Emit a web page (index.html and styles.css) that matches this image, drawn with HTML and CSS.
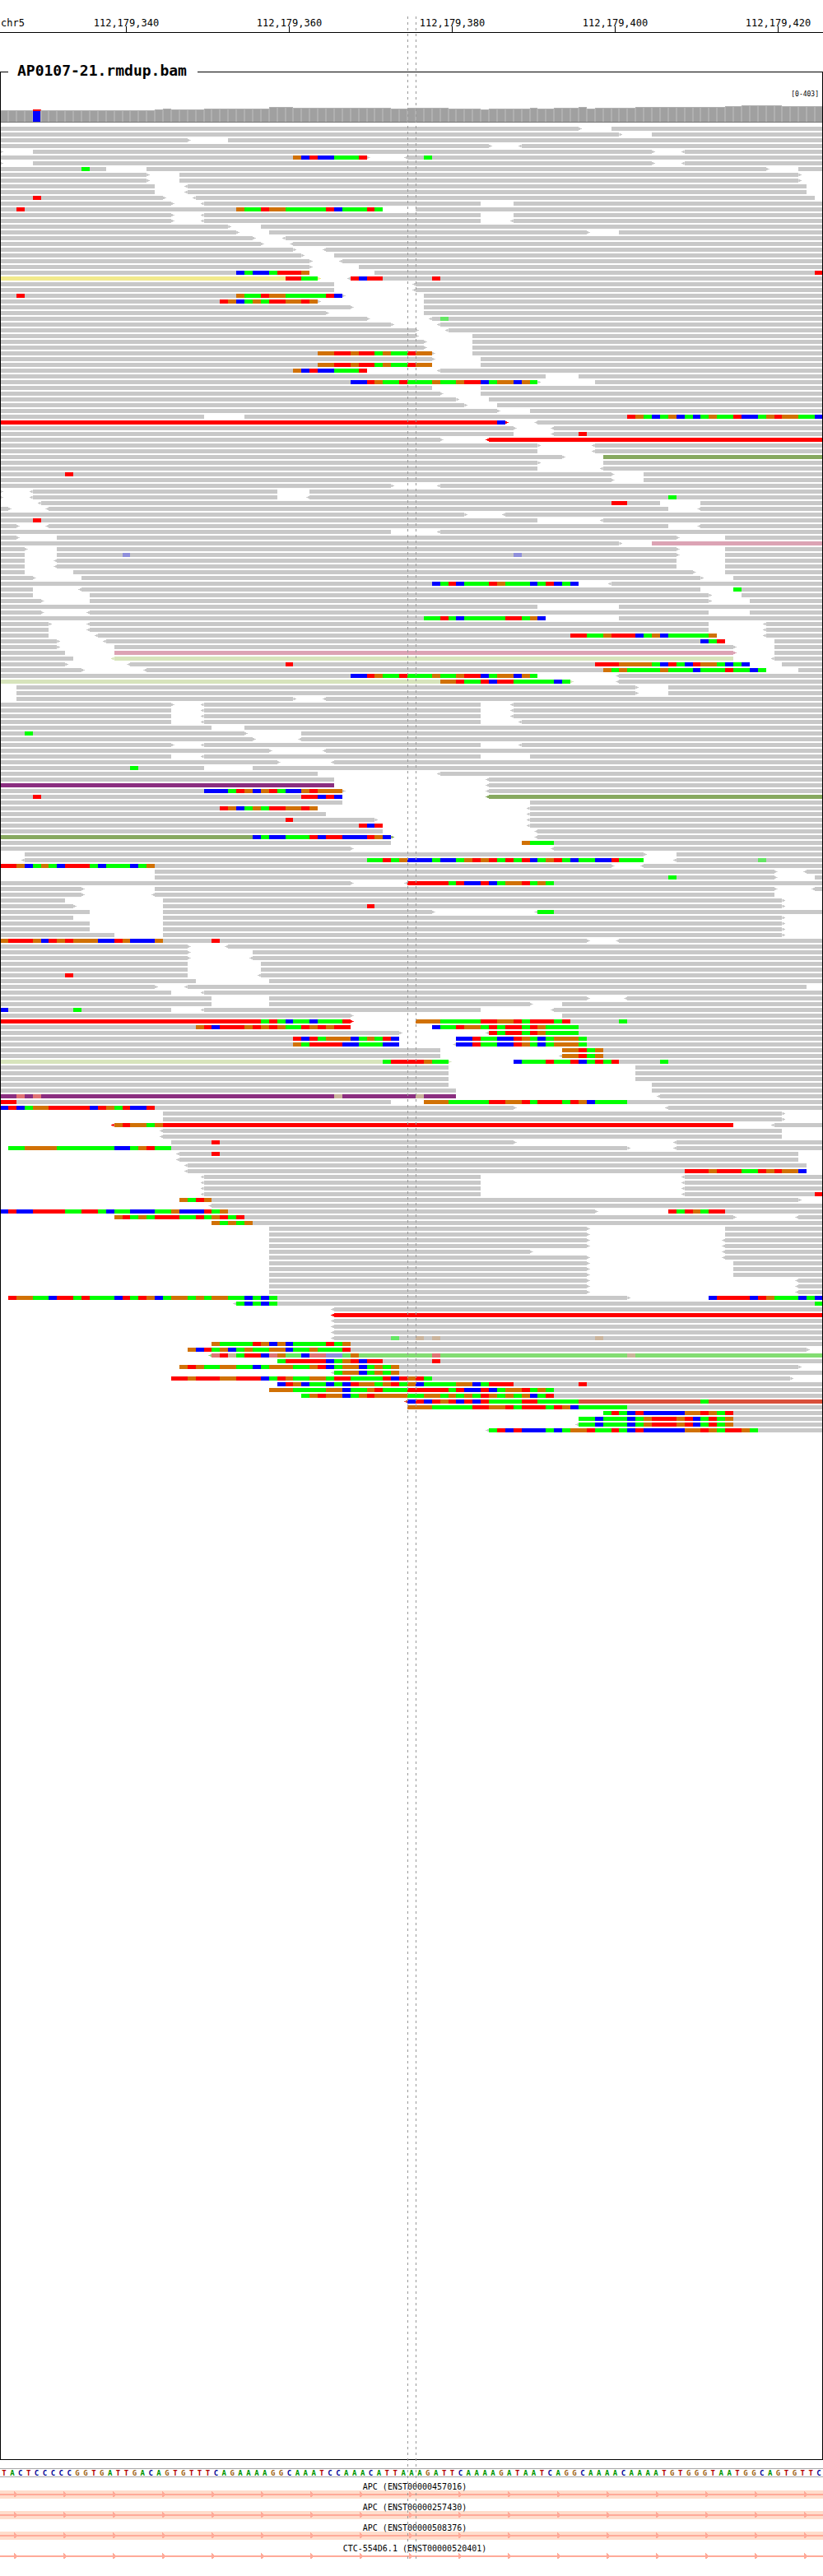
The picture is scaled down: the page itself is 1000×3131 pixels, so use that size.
FILE: index.html
```html
<!DOCTYPE html>
<html lang="en">
<head>
<meta charset="utf-8">
<title>AP0107-21.rmdup.bam</title>
<link rel="stylesheet" href="styles.css">
</head>
<body>
<header class="ruler">
  <span class="chrom">chr5</span>
  <div class="tick tick-340">112,179,340</div>
  <div class="tick tick-360">112,179,360</div>
  <div class="tick tick-380">112,179,380</div>
  <div class="tick tick-400">112,179,400</div>
  <div class="tick tick-420">112,179,420</div>
</header>

<main class="panel">
  <h1 class="panel-title">AP0107-21.rmdup.bam</h1>
  <p class="scale">[0-403]</p>
  <div class="coverage" id="coverage"></div>
  <div class="reads" id="reads"></div>
</main>

<div class="sequence" id="sequence"></div>

<section class="genes">
  <svg class="defs" width="0" height="0" aria-hidden="true">
    <defs>
      <pattern id="strand" width="60" height="10" patternUnits="userSpaceOnUse">
        <path class="strand-line" d="M0 4h60v2H0z"/>
        <path class="strand-line" d="M17 1h1v1h1v1h1v4h-1v1h-1h-1z"/>
      </pattern>
    </defs>
  </svg>
  <div class="gene exon"><p class="gene-name">APC (ENST00000457016)</p><svg class="gene-track"><rect width="100%" height="10" fill="url(#strand)"/></svg></div>
  <div class="gene exon"><p class="gene-name">APC (ENST00000257430)</p><svg class="gene-track"><rect width="100%" height="10" fill="url(#strand)"/></svg></div>
  <div class="gene exon"><p class="gene-name">APC (ENST00000508376)</p><svg class="gene-track"><rect width="100%" height="10" fill="url(#strand)"/></svg></div>
  <div class="gene"><p class="gene-name">CTC-554D6.1 (ENST00000520401)</p><svg class="gene-track"><rect width="100%" height="10" fill="url(#strand)"/></svg></div>
</section>

<div class="cursor"></div>
<script src="plot.js"></script>
</body>
</html>
```

FILE: styles.css
```css
* { box-sizing: border-box; }

body {
  position: relative;
  display: flex;
  flex-direction: column;
  min-height: 100vh;
  margin: 0;
  padding-bottom: 19px;
  background: #fff;
  color: #000;
  font-family: "DejaVu Sans Mono", monospace;
}

p, h1 { margin: 0; }

/* Every horizontal strip shares the same grid: one column per base. */
.ruler, .coverage, .row, .sequence {
  display: grid;
  grid-template-columns: repeat(101, minmax(0, 1fr));
}

.ruler {
  height: 40px;
  padding-top: 21px;
  border-bottom: 1px solid #000;
  font-size: 12px;
  line-height: 14px;
}
.chrom {
  grid-area: 1 / 1;
  padding-left: 1px;
}
.tick {
  grid-row: 1;
  display: flex;
  flex-direction: column;
  align-items: center;
  white-space: nowrap;
}
.tick::after {
  content: "";
  width: 1px;
  height: 7px;
  margin-top: -3px;
  background: #000;
}
.tick-340 { grid-column: 16; }
.tick-360 { grid-column: 36; }
.tick-380 { grid-column: 56; }
.tick-400 { grid-column: 76; }
.tick-420 { grid-column: 96; }

.panel {
  position: relative;
  flex: 1;
  margin-top: 47px;
  padding-top: 1px;
  display: flex;
  flex-direction: column;
}
/* The frame lies over the reads so that they pass under its sides. */
.panel::after {
  content: "";
  position: absolute;
  inset: 0;
  border: 1px solid #000;
  pointer-events: none;
}
.panel-title {
  position: relative;
  z-index: 1;
  align-self: flex-start;
  margin: -14px 0 0 10px;
  padding: 0 13px 0 11px;
  background: #fff;
  font-size: 18px;
  line-height: 24px;
}
.scale {
  margin-top: 12px;
  padding-right: 5px;
  font-size: 8px;
  line-height: 10px;
  text-align: right;
}

.coverage {
  height: 29px;
  align-items: end;
  border-bottom: 1px solid #777;
}
.depth {
  border: 1px solid #b0b0b0;
  border-bottom: 0;
  background: #a0a0a0;
}
.depth-variant {
  border-width: 0 1px 0 0;
  border-top: 2px solid #f00;
  background: #00f;
}

.reads { padding-top: 5px; }
.row {
  height: 5px;
  margin-bottom: 2px;
}
.read {
  grid-row: 1;
  position: relative;
  background: #c8c8c8;
}
.read-empty { width: 0; }
.forward::after, .reverse::before {
  content: "";
  position: absolute;
  top: 0;
  width: 4px;
  height: 5px;
  background: inherit;
}
.forward::after {
  left: 100%;
  clip-path: polygon(0 1px, 2px 1px, 2px 2px, 4px 2px, 4px 3px, 2px 3px, 2px 4px, 0 4px);
}
.reverse::before {
  right: 100%;
  clip-path: polygon(4px 1px, 2px 1px, 2px 2px, 0 2px, 0 3px, 2px 3px, 2px 4px, 4px 4px);
}

.read-red { background: #f00; }
.read-khaki { background: #f2ea8c; }
.read-olive { background: #87a960; }
.read-pink { background: #dca3b4; }
.read-sage { background: #d7e4bc; }
.read-purple { background: #8b2e80; }
.read-lime { background: #82dd72; }
.read-tomato { background: #d94f3a; }

.base { grid-row: 1; position: relative; }
.base-A { background: #0f0; }
.base-C { background: #00f; }
.base-G { background: #d17105; }
.base-T { background: #f00; }
.base-a { background: #64e664; }
.base-c { background: #8f8fdb; }
.base-g { background: #cbb49c; }
.base-t { background: #e07474; }

.sequence {
  height: 11px;
  margin-top: 10px;
  border-top: 1px solid #a8a8a8;
  border-bottom: 1px solid #a8a8a8;
  font-size: 9px;
  font-weight: bold;
  line-height: 11px;
  text-align: center;
}
.nt-A { color: #009600; }
.nt-C { color: #000096; }
.nt-G { color: #a06414; }
.nt-T { color: #b40000; }

.genes { padding-top: 1px; }
.defs { position: absolute; }
.gene { padding-top: 5px; }
.gene-name {
  height: 10px;
  padding-left: 8px;
  font-size: 10px;
  line-height: 12px;
  text-align: center;
}
.gene-track {
  display: block;
  width: 100%;
  height: 10px;
}
.exon .gene-track { background: #fdc; }
.strand-line { fill: #fa9; }

/* Dashed guides either side of the central base. */
.cursor {
  position: absolute;
  top: 20px;
  bottom: 21px;
  left: calc(100% * 50 / 101);
  width: calc(100% / 101 + 1px);
  background:
    repeating-linear-gradient(#999 0 3px, transparent 3px 7px) left / 1px 100% no-repeat,
    repeating-linear-gradient(#999 0 3px, transparent 3px 7px) right / 1px 100% no-repeat;
  pointer-events: none;
}
```

FILE: plot.js
```js
const BASES = 101;

// Column heights of the coverage track: [pixels, number of bases].
const DEPTH = [
  [14, 4], [15, 1], [14, 14], [15, 1], [16, 1], [15, 4], [16, 8], [18, 3], [17, 12], [16, 2],
  [17, 5], [16, 4], [15, 1], [16, 5], [17, 1], [16, 2], [17, 3], [18, 1], [16, 1],
  [17, 5], [18, 11], [19, 2], [20, 5], [19, 5]
];
const VARIANT = 4;

const SEQUENCE = "TACTCCCCCGGTGATTGACAGTGTTTCAGAAAAGGCAAATCCAAACATTAAAGATTCAAAAGATAATCAGGCAAAACAAAATGTGGGTAATGGCAGTGTTC";

// One line per row. A read is start-end, with < or > where it has an arrow,
// ~colour, and ;position:letters for mismatches (lower case = low quality).
const ROWS = `
0-71> 75-
0-76> 80-
0-23> 28-
0-60> <64-
0-0> 4-80> <84-
0-45>;36:GCTCCAAAT <50-;52:A
0-0> 4-80> <84-
0-13;10:A 18-94> 98-
0-18> 22-98>
0-18> 22-98>
0-19 <23-99
0-19 <23-99
0-20>;4:T <24-100
0-21> <25-59 63-
0-47;2:T;29:GAATGGAAAAATCAAATA 51-
0-21> <25-59 63-
0-21> <25-59 <63-
0-28> 32-
0-29> 33-72> 76-
0-31> <35-
0-32> <36-
0-36> <40-
0-37> 41-
0-38> <42-
0-38> 44-
0-38;29:CACCATTTG 46-;100:T
0-39>~khaki;35:TTAA <43-;43:TCTT;53:T
0-41 <51-
0-41 <51-
0-42>;2:T;29:GAATGGAAAAATC 52-
0-39>;27:TGCAGATTGGTG 52-
0-43> 52-
0-40> 52-
0-45> <53-;54:a
0-48> <54-
0-51> <55-
0-51> 58-
0-52> 58-
0-52> 58-
0-53>;39:GGTTGTTAGAATGG 58-
0-53> 59-
0-53;39:GGTTGTTAGAATGG 59-
0-45;36:GCTCCAAAT <54-
0-67 71-
0-66>;43:CCTGAATAAAGAAGTTCAGGCGA 73-
0-53 59-
0-54> 59-
0-56> 60-
0-57> 61-
0-61> 65-
0-25 30-;77:TGACAGCACAGAATCCAGTGGAAC
0-62>~red;61:C <66-
0-63> <68-
0-63 <68-;71:T
0-54> <60-~red
0-66> <73-
0-66 <73-
0-69> 74-~olive
0-66> 74-
0-66 <74-
0-75>;8:T 79-
0-75> 79-
0-48> <54-
0-0> <4-34 38-
0-0> <4-34 <38-;82:A
<5-81;75:TT 86-
0-1> <6-82 <86-
0-57> <62-
0-66;4:T <74-
0-2> <6-82 <86-
0-48 <54-
0-2> 7-83> 89-
0-76> 80-~pink
0-3> 7-83> 89-
0-3 7-83>;15:c;63:c 89-
0-3 <7-83 89-
0-3 <7-83 89-
0-3 9-85> 89-
0-4> 10-86> 90-
0-71;53:CATCAAATGAAACATCAC <75-
0-4 <10-86 90-;90:A
0-4 11-87> 91-
0-5> 11-87> 92-
0-66 76-
0-5> <11-87 92-
0-67;52:AATACAAAAATTAGC 76-
0-6> <11-87 <94-
0-6 <11-87 <94-
0-6 <12-88;70:TTAAGTTTCAGCAAAAAG <94-
0-7> <13-89;86:CAT 95-
0-7> 14-90> 95-
0-8 14-90>~pink 95-
0-9 <14-90~sage <95-
0-8> <16-92;35:T;73:TTTGGGGACTACTGGACAC 96-
0-10> <18-94;74:GAGAAAAGAAACAAATAACA 98-
0-66;43:CCTGAATAAAGAAGTTCAGGCGA <76-
0-70>~sage;54:GGTAATCTTAAAAACA <76-
2-78> 82-
2-78> 82-
2-36> <40-
0-21> <25-59 <63-
0-21 <25-59 <63-
0-21 <25-59 <63-
0-21 <25-59 <64-
0-26 30-
0-30>;3:A 37-
0-31> <37-
0-21> <25-59 <64-
0-33> <40-
0-21 <25-59 65-
0-34> <41-
0-25;16:A 31-
0-39 <54-
0-41 <60-
0-41~purple <60-
0-42>;25:CCCATGCGTACCGTGGG <60-
0-42;4:T;37:TTCTC <60-~olive
0-42 65-
0-39;27:TGCAGATTGGTG <65-
0-40 <65-
0-46>;35:T <65-
0-47;44:TCT <65-
0-47 <66-
0-48>~olive;31:CACCAAATCTTCCCTGC <66-
0-48 64-;64:GAAA
0-43> <68-
3-79> 83-
<3-79;45:AATAGCCCACCAGTGTATATCAGTACAACCTAAA <83-;93:a
0-75>;0:TTGCAGACTTTACAAACAG <79-
19-95> <99-
19-95>;82:A 100-
0-43> <50-;50:TTTTTATCCTCAGGTAGA
0-10> 19-95> <100-
0-10> <19-95
0-8 20-96>
0-9> 20-96>;45:T
0-11 20-53> <66-;66:AA
0-9 20-96>
0-11 20-96>
0-11 20-96>
0-14 20-96>
0-72>;0:GTTTGCTGTGGGCCTGCCCG;26:T <76-
0-23> <28-
0-23> 31-
0-23> <31-
0-23 32-
0-23 32-
0-23;8:T <32-
0-24 33-
0-19> <23-99
0-21 <25-
0-26 33-72> <77-
0-26 33-65> 69-
0-21;0:C;9:A <25-59 <68-
0-43> 69-
0-43>~red;32:ATACAACAAAT 51-;51:GGGAAAAATTGGTATTTAT;76:A
0-43;24:GTCTTTGTGTGAATGTGTT 53-;53:CAATGGATATTATGAAAA
0-49> <60-;60:TATTATGAAAA
0-49;36:TCTAGGGCAGATC 56-;56:CCTAACCTGACAGGGA
0-49;36:GATTTTCCAAACC <56-;56:CCTAACCTGACAGGGA
0-54 69-;69:GGTAG
0-54 <69-;69:GGTAG
0-55>~sage;47:ATTTTGAA 63-;63:CAAATAATCATAT;81:A
0-55 78-
0-55 78-
0-55 78-
0-55 80-
0-56 80-
0-56~purple;2:t;4:t;41:g;51:g <81-
0-48;0:TT 52-;52:GGGAAAAATTGGTATTTATGCAAAA
0-63>;0:CTCAGGTTTTTCTGATCCT <82-
20-96>
20-96>
<14-90~red;14:GTGGAG <95-
<20-96
<20-96
21-63>;26:T <83-
1-77>;1:AAGGGGAAAAAAACCAGTAA <83-
<22-98;26:T
<22-98
<23-99
<23-99;84:TTTGTTTAATGTGGC
<25-59 <84-
<25-59 <84-
<25-59 <84-
<25-59 <84-;100:T
22-98>;22:GATG
<26-
0-73>;0:CTCCTTTTAATTACAACCCAAGCCCTAG 82-;82:TATGATT
14-90>;14:GTAGATTTAATAGTAT <98-
26-;26:GAGAG
33-72> 89-
33-72> 89-
33-72> <89-
33-72> <89-
33-65> <89-
33-72> <89-
33-72> 90-
33-72> 90-
33-72> 90-
33-72> <98-
33-72> <98-
33-72> <98-
1-77>;1:TGGAACTTATAAACTATGCAGGAGAGGAACACA 87-;87:CTTTTCTGAAACAC
<29-;29:ACACA;100:A
<41-
<41-~red
<41-
<41-
<41-
<41-;48:a;51:g;53:g;73:g
26-;26:GAAAATGCGCAAAATAG
23-99>;23:GCTAGCAGAAGGCAAGAAAT
<26-~lime;26:tTgATTCtGaaCttccaG;53:t;77:g
34-;34:ATTTTTCAGTCTT;53:T
22-98>;22:GTGAAGGAACAGGGAAGTCAGGCAGAG
<41-;41:AGGCAGAG
21-97>;21:TTGTTTGGTTTCATGAAGGATTAAAATCTGTA
34-;34:CTGCAACACTGGAGTAGCAAAAGGCATTT;71:T
33-;33:GGGAAAAGGCAAGTAAATTTTTATCCTCAGGTAGA
37-;37:AGTGGCAGTGGGGAAGGAGAGATGAGAGCAT
<50-~tomato;50:CTCTGTCTCTAAAATTAAAAA;86:A
50-;50:GGGAAAAATTGGTATTTATGCAAAAAA
74-;74:ATACTCCCCCGGTGAT
71-;71:AACAAACAGTTTGTCATAG
<71-;71:AACAAACAGTTTGTCATAG
<60-;60:ATCTCCCACAGGTAATACTCCCCCGGTGATTGA
`.trim().split("\n");

function element(className, text) {
  const node = document.createElement("div");
  node.className = className;
  if (text) node.textContent = text;
  return node;
}

const coverage = document.getElementById("coverage");
DEPTH.flatMap(([height, count]) => Array(count).fill(height)).forEach((height, i) => {
  const column = element(i === VARIANT ? "depth depth-variant" : "depth");
  column.style.height = height + "px";
  coverage.append(column);
});

function addBases(row, start, letters) {
  for (const run of letters.match(/(.)\1*/g)) {
    const node = element("base base-" + run[0]);
    node.style.gridColumn = `${start + 1} / span ${run.length}`;
    row.append(node);
    start += run.length;
  }
}

const reads = document.getElementById("reads");
for (const line of ROWS) {
  const row = element("row");
  for (const spec of line.split(" ")) {
    const [head, ...mismatches] = spec.split(";");
    const [, reverse, from, to, forward, colour] = head.match(/^(<?)(\d+)-(\d*)(>?)(?:~(\w+))?$/);
    const start = Number(from);
    const end = to === "" ? BASES : Number(to);
    const read = element("read");
    if (reverse) read.classList.add("reverse");
    if (forward) read.classList.add("forward");
    if (colour) read.classList.add("read-" + colour);
    if (end === start) read.classList.add("read-empty");
    read.style.gridColumn = `${start + 1} / ${Math.max(end, start + 1) + 1}`;
    row.append(read);
    for (const mismatch of mismatches) {
      const [position, letters] = mismatch.split(":");
      addBases(row, Number(position), letters);
    }
  }
  reads.append(row);
}

const sequence = document.getElementById("sequence");
for (const letter of SEQUENCE) sequence.append(element("nt-" + letter, letter));
```
